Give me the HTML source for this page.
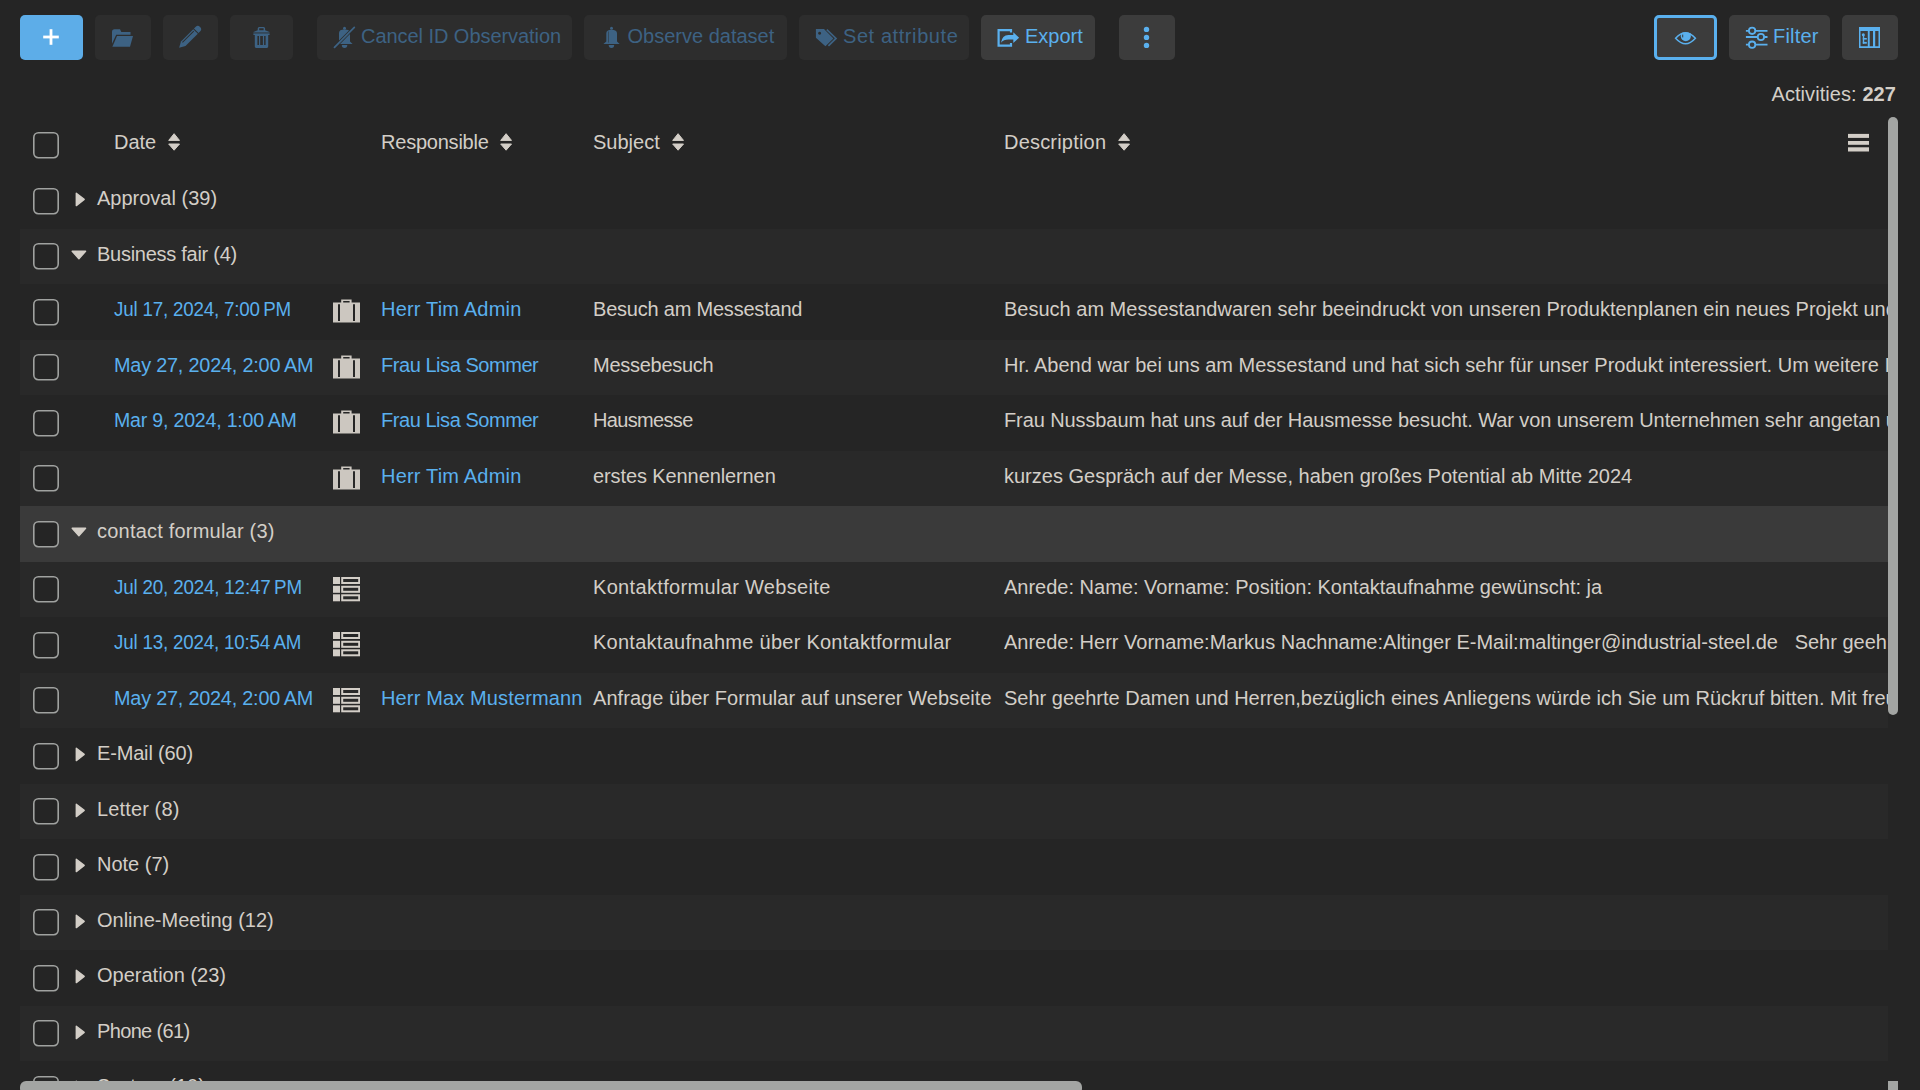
<!DOCTYPE html>
<html><head><meta charset="utf-8"><title>Activities</title><style>
html,body{margin:0;padding:0;width:1920px;height:1090px;overflow:hidden;background:#252525;font-family:"Liberation Sans",sans-serif;font-size:20px;color:#d3cec7}
.a{position:absolute}
.a svg{display:block}
svg.a{display:block}
.t{position:absolute;white-space:nowrap;line-height:22px;height:22px}
.btn{position:absolute;top:15px;height:45px;border-radius:5px}
.row{position:absolute;left:20px;width:1868px;height:55.5px}
.cb{position:absolute;left:33px;width:26px;height:26.6px;box-sizing:border-box;border:2px solid #8a8b8a;border-radius:5px;background:#252525}
</style></head><body>
<div class="btn" style="left:20px;width:63px;background:#5dade8;"></div>
<svg class="a" style="left:41px;top:27px" width="20" height="20" viewBox="0 0 20 20"><rect x="8.6" y="2.2" width="2.8" height="15.6" fill="#fff"/><rect x="2.2" y="8.6" width="15.6" height="2.8" fill="#fff"/></svg>
<div class="btn" style="left:95px;width:56px;background:#2d2d2d;"></div>
<svg class="a" style="left:105px;top:20px" width="40" height="35" viewBox="0 0 40 35"><g fill="#3d6283"><path d="M7 12 Q7 9.3 9.5 9.3 L15 9.3 L16.3 12 L25.5 12 L25.5 14.8 L11.2 14.8 L7 23.8 Z"/><path d="M12 15.9 L28 15.9 L25 26.7 L7.4 26.7 Z"/></g></svg>
<div class="btn" style="left:163px;width:55px;background:#2d2d2d;"></div>
<svg class="a" style="left:170px;top:20px" width="40" height="35" viewBox="0 0 40 35"><g fill="#3d6283" transform="rotate(-45 19.6 17.4)"><path d="M4.8 17.4 L10.6 14.2 L28 14.2 L28 20.6 L10.6 20.6 Z"/><path d="M29 14.2 L31.5 14.2 Q34.4 14.2 34.4 17.4 Q34.4 20.6 31.5 20.6 L29 20.6 Z"/><rect x="11" y="15.4" width="16" height="0.9" fill="#2d2d2d"/></g></svg>
<div class="btn" style="left:230px;width:63px;background:#2d2d2d;"></div>
<svg class="a" style="left:242px;top:20px" width="40" height="35" viewBox="0 0 40 35"><g fill="#3d6283"><path fill-rule="evenodd" d="M15.7 10.3 L15.7 8.4 Q15.7 6.9 17.2 6.9 L21.6 6.9 Q23.1 6.9 23.1 8.4 L23.1 10.3 L27.6 12 L27.6 12.6 L11.4 12.6 L11.4 12 Z M17.2 8.2 L17.2 10.3 L21.6 10.3 L21.6 8.2 Z"/><rect x="11.4" y="13.4" width="16.2" height="1.6"/><path fill-rule="evenodd" d="M12.8 15 L26.2 15 L26.2 26.6 Q26.2 27.9 24.9 27.9 L14.1 27.9 Q12.8 27.9 12.8 26.6 Z M15.4 16 L15.4 25 L17 25 L17 16 Z M18.2 16 L18.2 25 L20.9 25 L20.9 16 Z M22.1 16 L22.1 25 L23.6 25 L23.6 16 Z"/></g></svg>
<div class="btn" style="left:317px;width:255px;background:#2d2d2d;"></div>
<svg class="a" style="left:328px;top:22px" width="34" height="30" viewBox="0 0 34 30"><g fill="#3d6283"><circle cx="16.5" cy="6.3" r="1.5"/><path d="M11 19.5 L11 11 Q11 7.6 16.5 7.6 Q22 7.6 22 11 L22 19.5 L24.6 21.9 L8.3 21.9 Z"/><path d="M13.8 23.1 L19.3 23.1 Q19.3 26 16.5 26 Q13.8 26 13.8 23.1 Z"/></g><line x1="6.5" y1="25.4" x2="26.3" y2="5.4" stroke="#2d2d2d" stroke-width="3.2"/><line x1="6.5" y1="25.4" x2="26.3" y2="5.4" stroke="#3d6283" stroke-width="1.8" stroke-linecap="round"/></svg>
<div class="btn" style="left:584px;width:203px;background:#2d2d2d;"></div>
<svg class="a" style="left:598px;top:22px" width="26" height="30" viewBox="0 0 26 30"><g fill="#3d6283"><circle cx="13.5" cy="6.3" r="1.5"/><path d="M8.3 19.6 L8.3 11.2 Q8.3 7.7 13.5 7.7 Q19 7.7 19 11.2 L19 19.6 L21.7 22 L5.4 22 Z"/><path d="M10.7 23.1 L16.2 23.1 Q16.2 26 13.5 26 Q10.7 26 10.7 23.1 Z"/></g><rect x="10" y="9.5" width="0.8" height="11" fill="#2d2d2d" opacity="0.6"/></svg>
<div class="btn" style="left:799px;width:170px;background:#2d2d2d;"></div>
<svg class="a" style="left:810px;top:22px" width="32" height="30" viewBox="0 0 32 30"><path fill="#3d6283" fill-rule="evenodd" d="M5.9 7 L14 7 L23.4 16.5 L15.4 24.3 L5.9 15.8 Z M9.6 9.8 A1.5 1.5 0 1 0 9.61 9.8 Z"/><path fill="none" stroke="#3d6283" stroke-width="1.7" d="M16.8 7.7 L26 16.4 L18.4 23.9"/></svg>
<div class="btn" style="left:981px;width:114px;background:#3c3c3c;"></div>
<svg class="a" style="left:992px;top:22px" width="32" height="30" viewBox="0 0 32 30"><path fill="none" stroke="#5ab0ee" stroke-width="2.2" d="M19 10.6 L19 8.1 L6.6 8.1 L6.6 23.7 L19 23.7 L19 21"/><path fill="#5ab0ee" d="M9 20.8 Q10 13 16.5 12.9 L21.3 12.9 L21.3 10.2 L27.1 15.8 L21.3 20.9 L21.3 17.6 L16.5 17.6 Q11.5 17.6 9 20.8 Z"/></svg>
<div class="btn" style="left:1119px;width:56px;background:#3c3c3c;"></div>
<svg class="a" style="left:1130px;top:22px" width="32" height="30" viewBox="0 0 32 30"><g fill="#5ab0ee"><circle cx="16.5" cy="7.4" r="2.7"/><circle cx="16.5" cy="15.4" r="2.7"/><circle cx="16.5" cy="23.4" r="2.7"/></g></svg>
<div class="btn" style="left:1654px;width:63px;background:#3c3c3c;box-sizing:border-box;border:3px solid #5ab0ee"></div>
<svg class="a" style="left:1670px;top:25px" width="32" height="25" viewBox="0 0 32 25"><path fill="none" stroke="#5ab0ee" stroke-width="1.5" d="M5.6 13.2 Q15.5 2.2 25.4 13.2 Q15.5 24.2 5.6 13.2 Z"/><path fill="#5ab0ee" d="M11 8.3 Q15.8 6.6 20.6 8.3 Q20.8 9.6 20.8 11.3 A5 5 0 0 1 10.8 11.3 Q10.8 9.6 11 8.3 Z"/><rect x="12.2" y="9.6" width="1" height="2.8" fill="#3c3c3c"/></svg>
<div class="btn" style="left:1729px;width:101px;background:#3c3c3c;"></div>
<svg class="a" style="left:1740px;top:22px" width="32" height="30" viewBox="0 0 32 30"><g stroke="#5ab0ee" stroke-width="1.8" fill="none"><path d="M5.9 8.8 H8.9 M15.3 8.8 H27.5 M5.9 15 H17.7 M24.1 15 H27.5 M5.9 22.7 H8.9 M15.3 22.7 H27.5"/><circle cx="12.1" cy="8.8" r="3.2"/><circle cx="20.9" cy="15" r="3.2"/><circle cx="12.1" cy="22.7" r="3.2"/></g></svg>
<div class="btn" style="left:1842px;width:56px;background:#3c3c3c;"></div>
<svg class="a" style="left:1854px;top:22px" width="32" height="30" viewBox="0 0 32 30"><g fill="#5ab0ee"><path fill-rule="evenodd" d="M5 5 H26 V26 H5 Z M6.5 9.1 V24.3 H13.8 V9.1 Z M15.7 9.1 V24.3 H19 V9.1 Z M21.2 9.1 V24.3 H24.5 V9.1 Z"/><circle cx="9.3" cy="12.7" r="1.5"/><rect x="8.8" y="12.7" width="1.4" height="9"/><rect x="8.8" y="16" width="4" height="1.6"/><rect x="8.8" y="19.9" width="4" height="1.8"/></g></svg>
<div class="t" style="left:361px;top:25px;color:#3d6283;letter-spacing:-0.05px;">Cancel ID Observation</div>
<div class="t" style="left:627.5px;top:25px;color:#3d6283;">Observe dataset</div>
<div class="t" style="left:843px;top:25px;color:#3d6283;letter-spacing:0.58px;">Set attribute</div>
<div class="t" style="left:1025px;top:25px;color:#5ab0ee;">Export</div>
<div class="t" style="left:1773px;top:25px;color:#5ab0ee;letter-spacing:0.2px;">Filter</div>
<div class="t" style="left:1771.5px;top:83px;color:#d3cec7;letter-spacing:0.07px;">Activities: <b>227</b></div>
<svg class="a" style="left:33px;top:132.10px" width="26" height="27" viewBox="0 0 26 27"><rect x="0.8" y="0.8" width="24.4" height="24.9" rx="4.6" fill="#252525" stroke="#a0a2a0" stroke-width="1.6"/></svg>
<div class="t" style="left:114px;top:131px;">Date</div>
<div class="t" style="left:381px;top:131px;letter-spacing:-0.22px;">Responsible</div>
<div class="t" style="left:593px;top:131px;">Subject</div>
<div class="t" style="left:1004px;top:131px;letter-spacing:0.2px;">Description</div>
<svg class="a" style="left:168px;top:132.5px" width="12" height="19" viewBox="0 0 12 19"><path d="M6.1 0.7 L11.5 7.4 L0.7 7.4 Z M0.7 11 L11.5 11 L6.1 17.2 Z" fill="#d3cec7" stroke="#d3cec7" stroke-width="1" stroke-linejoin="round"/></svg>
<svg class="a" style="left:500px;top:132.5px" width="12" height="19" viewBox="0 0 12 19"><path d="M6.1 0.7 L11.5 7.4 L0.7 7.4 Z M0.7 11 L11.5 11 L6.1 17.2 Z" fill="#d3cec7" stroke="#d3cec7" stroke-width="1" stroke-linejoin="round"/></svg>
<svg class="a" style="left:672px;top:132.5px" width="12" height="19" viewBox="0 0 12 19"><path d="M6.1 0.7 L11.5 7.4 L0.7 7.4 Z M0.7 11 L11.5 11 L6.1 17.2 Z" fill="#d3cec7" stroke="#d3cec7" stroke-width="1" stroke-linejoin="round"/></svg>
<svg class="a" style="left:1118px;top:132.5px" width="12" height="19" viewBox="0 0 12 19"><path d="M6.1 0.7 L11.5 7.4 L0.7 7.4 Z M0.7 11 L11.5 11 L6.1 17.2 Z" fill="#d3cec7" stroke="#d3cec7" stroke-width="1" stroke-linejoin="round"/></svg>
<svg class="a" style="left:1848px;top:133px" width="21" height="19" viewBox="0 0 21 19"><g fill="#d3cec7"><rect x="0" y="0.9" width="21" height="4"/><rect x="0" y="8" width="21" height="3.8"/><rect x="0" y="14.3" width="21" height="4.2"/></g></svg>
<svg class="a" style="left:33px;top:187.70px" width="26" height="27" viewBox="0 0 26 27"><rect x="0.8" y="0.8" width="24.4" height="24.9" rx="4.6" fill="#252525" stroke="#a0a2a0" stroke-width="1.6"/></svg>
<svg class="a" style="left:75px;top:192.3px" width="11" height="16" viewBox="0 0 11 16"><path d="M1.3 1.2 L9.2 7.4 L1.3 13.6 Z" fill="#d3cec7" stroke="#d3cec7" stroke-width="1.4" stroke-linejoin="round"/></svg>
<div class="t" style="left:97px;top:187px;">Approval (39)</div>
<div class="row" style="top:228.50px;background:#292929"></div>
<svg class="a" style="left:33px;top:243.20px" width="26" height="27" viewBox="0 0 26 27"><rect x="0.8" y="0.8" width="24.4" height="24.9" rx="4.6" fill="#252525" stroke="#a0a2a0" stroke-width="1.6"/></svg>
<svg class="a" style="left:71px;top:249.8px" width="16" height="11" viewBox="0 0 16 11"><path d="M1.2 1.2 L14.6 1.2 L7.9 8.8 Z" fill="#d3cec7" stroke="#d3cec7" stroke-width="1.4" stroke-linejoin="round"/></svg>
<div class="t" style="left:97px;top:243px;letter-spacing:-0.27px;">Business fair (4)</div>
<svg class="a" style="left:33px;top:298.70px" width="26" height="27" viewBox="0 0 26 27"><rect x="0.8" y="0.8" width="24.4" height="24.9" rx="4.6" fill="#252525" stroke="#a0a2a0" stroke-width="1.6"/></svg>
<div class="t" style="left:114px;top:298px;color:#5ab0ee;letter-spacing:-0.2px;transform:scaleX(0.9375);transform-origin:0 0;">Jul 17, 2024, 7:00 PM</div>
<div class="a" style="left:333px;top:299.40px;width:27px;height:25px"><svg width="27" height="25" viewBox="0 0 27 25"><path fill="#ccc7c0" fill-rule="evenodd" d="M8.2 0.6 H18.6 V3.6 H27 V23.6 H0 V3.6 H8.2 Z M10.2 2.1 V3.6 H16.6 V2.1 Z M5 5.2 V22 H7 V5.2 Z M20 5.2 V22 H22 V5.2 Z"/></svg></div>
<div class="t" style="left:381px;top:298px;color:#5ab0ee;letter-spacing:0.19px;">Herr Tim Admin</div>
<div class="t" style="left:593px;top:298px;letter-spacing:-0.21px;">Besuch am Messestand</div>
<div class="t" style="left:1004px;top:298px;width:884px;overflow:hidden">Besuch am Messestandwaren sehr beeindruckt von unseren Produktenplanen ein neues Projekt und benötigen dafür</div>
<div class="row" style="top:339.50px;background:#292929"></div>
<svg class="a" style="left:33px;top:354.20px" width="26" height="27" viewBox="0 0 26 27"><rect x="0.8" y="0.8" width="24.4" height="24.9" rx="4.6" fill="#252525" stroke="#a0a2a0" stroke-width="1.6"/></svg>
<div class="t" style="left:114px;top:354px;color:#5ab0ee;letter-spacing:-0.2px;transform:scaleX(0.9917);transform-origin:0 0;">May 27, 2024, 2:00 AM</div>
<div class="a" style="left:333px;top:354.90px;width:27px;height:25px"><svg width="27" height="25" viewBox="0 0 27 25"><path fill="#ccc7c0" fill-rule="evenodd" d="M8.2 0.6 H18.6 V3.6 H27 V23.6 H0 V3.6 H8.2 Z M10.2 2.1 V3.6 H16.6 V2.1 Z M5 5.2 V22 H7 V5.2 Z M20 5.2 V22 H22 V5.2 Z"/></svg></div>
<div class="t" style="left:381px;top:354px;color:#5ab0ee;letter-spacing:-0.45px;">Frau Lisa Sommer</div>
<div class="t" style="left:593px;top:354px;letter-spacing:-0.27px;">Messebesuch</div>
<div class="t" style="left:1004px;top:354px;width:884px;overflow:hidden">Hr. Abend war bei uns am Messestand und hat sich sehr für unser Produkt interessiert. Um weitere Informationen</div>
<svg class="a" style="left:33px;top:409.70px" width="26" height="27" viewBox="0 0 26 27"><rect x="0.8" y="0.8" width="24.4" height="24.9" rx="4.6" fill="#252525" stroke="#a0a2a0" stroke-width="1.6"/></svg>
<div class="t" style="left:114px;top:409px;color:#5ab0ee;letter-spacing:-0.2px;transform:scaleX(0.9776);transform-origin:0 0;">Mar 9, 2024, 1:00 AM</div>
<div class="a" style="left:333px;top:410.40px;width:27px;height:25px"><svg width="27" height="25" viewBox="0 0 27 25"><path fill="#ccc7c0" fill-rule="evenodd" d="M8.2 0.6 H18.6 V3.6 H27 V23.6 H0 V3.6 H8.2 Z M10.2 2.1 V3.6 H16.6 V2.1 Z M5 5.2 V22 H7 V5.2 Z M20 5.2 V22 H22 V5.2 Z"/></svg></div>
<div class="t" style="left:381px;top:409px;color:#5ab0ee;letter-spacing:-0.45px;">Frau Lisa Sommer</div>
<div class="t" style="left:593px;top:409px;letter-spacing:-0.66px;">Hausmesse</div>
<div class="t" style="left:1004px;top:409px;width:884px;overflow:hidden"><span style="letter-spacing:-0.1px">Frau Nussbaum hat uns auf der Hausmesse besucht. War von unserem Unternehmen sehr angetan und</span></div>
<div class="row" style="top:450.50px;background:#292929"></div>
<svg class="a" style="left:33px;top:465.20px" width="26" height="27" viewBox="0 0 26 27"><rect x="0.8" y="0.8" width="24.4" height="24.9" rx="4.6" fill="#252525" stroke="#a0a2a0" stroke-width="1.6"/></svg>
<div class="a" style="left:333px;top:465.90px;width:27px;height:25px"><svg width="27" height="25" viewBox="0 0 27 25"><path fill="#ccc7c0" fill-rule="evenodd" d="M8.2 0.6 H18.6 V3.6 H27 V23.6 H0 V3.6 H8.2 Z M10.2 2.1 V3.6 H16.6 V2.1 Z M5 5.2 V22 H7 V5.2 Z M20 5.2 V22 H22 V5.2 Z"/></svg></div>
<div class="t" style="left:381px;top:465px;color:#5ab0ee;letter-spacing:0.19px;">Herr Tim Admin</div>
<div class="t" style="left:593px;top:465px;letter-spacing:-0.1px;">erstes Kennenlernen</div>
<div class="t" style="left:1004px;top:465px;width:884px;overflow:hidden">kurzes Gespräch auf der Messe, haben großes Potential ab Mitte 2024</div>
<div class="row" style="top:506.00px;background:#3a3a3a"></div>
<svg class="a" style="left:33px;top:520.70px" width="26" height="27" viewBox="0 0 26 27"><rect x="0.8" y="0.8" width="24.4" height="24.9" rx="4.6" fill="#252525" stroke="#a0a2a0" stroke-width="1.6"/></svg>
<svg class="a" style="left:71px;top:527.3px" width="16" height="11" viewBox="0 0 16 11"><path d="M1.2 1.2 L14.6 1.2 L7.9 8.8 Z" fill="#d3cec7" stroke="#d3cec7" stroke-width="1.4" stroke-linejoin="round"/></svg>
<div class="t" style="left:97px;top:520px;letter-spacing:0.21px;">contact formular (3)</div>
<div class="row" style="top:561.50px;background:#292929"></div>
<svg class="a" style="left:33px;top:576.20px" width="26" height="27" viewBox="0 0 26 27"><rect x="0.8" y="0.8" width="24.4" height="24.9" rx="4.6" fill="#252525" stroke="#a0a2a0" stroke-width="1.6"/></svg>
<div class="t" style="left:114px;top:576px;color:#5ab0ee;letter-spacing:-0.2px;transform:scaleX(0.9407);transform-origin:0 0;">Jul 20, 2024, 12:47 PM</div>
<div class="a" style="left:333px;top:576.90px;width:27px;height:25px"><svg width="27" height="25" viewBox="0 0 27 25"><g fill="#d3cec7"><rect x="0" y="0" width="7" height="7"/><rect x="0" y="8.8" width="7" height="7"/><rect x="0" y="17.3" width="7" height="7"/></g><g fill="none" stroke="#d3cec7" stroke-width="2"><rect x="9.2" y="1" width="17" height="5"/><rect x="9.2" y="9.8" width="17" height="5"/><rect x="9.2" y="18.3" width="17" height="5"/></g></svg></div>
<div class="t" style="left:593px;top:576px;letter-spacing:0.33px;">Kontaktformular Webseite</div>
<div class="t" style="left:1004px;top:576px;width:884px;overflow:hidden">Anrede: Name: Vorname: Position: Kontaktaufnahme gewünscht: ja</div>
<svg class="a" style="left:33px;top:631.70px" width="26" height="27" viewBox="0 0 26 27"><rect x="0.8" y="0.8" width="24.4" height="24.9" rx="4.6" fill="#252525" stroke="#a0a2a0" stroke-width="1.6"/></svg>
<div class="t" style="left:114px;top:631px;color:#5ab0ee;letter-spacing:-0.2px;transform:scaleX(0.9372);transform-origin:0 0;">Jul 13, 2024, 10:54 AM</div>
<div class="a" style="left:333px;top:632.40px;width:27px;height:25px"><svg width="27" height="25" viewBox="0 0 27 25"><g fill="#d3cec7"><rect x="0" y="0" width="7" height="7"/><rect x="0" y="8.8" width="7" height="7"/><rect x="0" y="17.3" width="7" height="7"/></g><g fill="none" stroke="#d3cec7" stroke-width="2"><rect x="9.2" y="1" width="17" height="5"/><rect x="9.2" y="9.8" width="17" height="5"/><rect x="9.2" y="18.3" width="17" height="5"/></g></svg></div>
<div class="t" style="left:593px;top:631px;letter-spacing:0.26px;">Kontaktaufnahme über Kontaktformular</div>
<div class="t" style="left:1004px;top:631px;width:884px;overflow:hidden">Anrede: Herr Vorname:Markus Nachname:Altinger E-Mail:maltinger@industrial-steel.de&nbsp;&nbsp;&nbsp;Sehr geehrte Damen</div>
<div class="row" style="top:672.50px;background:#292929"></div>
<svg class="a" style="left:33px;top:687.20px" width="26" height="27" viewBox="0 0 26 27"><rect x="0.8" y="0.8" width="24.4" height="24.9" rx="4.6" fill="#252525" stroke="#a0a2a0" stroke-width="1.6"/></svg>
<div class="t" style="left:114px;top:687px;color:#5ab0ee;letter-spacing:-0.2px;transform:scaleX(0.9907);transform-origin:0 0;">May 27, 2024, 2:00 AM</div>
<div class="a" style="left:333px;top:687.90px;width:27px;height:25px"><svg width="27" height="25" viewBox="0 0 27 25"><g fill="#d3cec7"><rect x="0" y="0" width="7" height="7"/><rect x="0" y="8.8" width="7" height="7"/><rect x="0" y="17.3" width="7" height="7"/></g><g fill="none" stroke="#d3cec7" stroke-width="2"><rect x="9.2" y="1" width="17" height="5"/><rect x="9.2" y="9.8" width="17" height="5"/><rect x="9.2" y="18.3" width="17" height="5"/></g></svg></div>
<div class="t" style="left:381px;top:687px;color:#5ab0ee;letter-spacing:0.14px;">Herr Max Mustermann</div>
<div class="t" style="left:593px;top:687px;letter-spacing:0.05px;">Anfrage über Formular auf unserer Webseite</div>
<div class="t" style="left:1004px;top:687px;width:884px;overflow:hidden">Sehr geehrte Damen und Herren,bezüglich eines Anliegens würde ich Sie um Rückruf bitten. Mit freundlichen Grüßen</div>
<svg class="a" style="left:33px;top:742.70px" width="26" height="27" viewBox="0 0 26 27"><rect x="0.8" y="0.8" width="24.4" height="24.9" rx="4.6" fill="#252525" stroke="#a0a2a0" stroke-width="1.6"/></svg>
<svg class="a" style="left:75px;top:747.3px" width="11" height="16" viewBox="0 0 11 16"><path d="M1.3 1.2 L9.2 7.4 L1.3 13.6 Z" fill="#d3cec7" stroke="#d3cec7" stroke-width="1.4" stroke-linejoin="round"/></svg>
<div class="t" style="left:97px;top:742px;letter-spacing:-0.17px;">E-Mail (60)</div>
<div class="row" style="top:783.50px;background:#292929"></div>
<svg class="a" style="left:33px;top:798.20px" width="26" height="27" viewBox="0 0 26 27"><rect x="0.8" y="0.8" width="24.4" height="24.9" rx="4.6" fill="#252525" stroke="#a0a2a0" stroke-width="1.6"/></svg>
<svg class="a" style="left:75px;top:802.8px" width="11" height="16" viewBox="0 0 11 16"><path d="M1.3 1.2 L9.2 7.4 L1.3 13.6 Z" fill="#d3cec7" stroke="#d3cec7" stroke-width="1.4" stroke-linejoin="round"/></svg>
<div class="t" style="left:97px;top:798px;letter-spacing:0.13px;">Letter (8)</div>
<svg class="a" style="left:33px;top:853.70px" width="26" height="27" viewBox="0 0 26 27"><rect x="0.8" y="0.8" width="24.4" height="24.9" rx="4.6" fill="#252525" stroke="#a0a2a0" stroke-width="1.6"/></svg>
<svg class="a" style="left:75px;top:858.3px" width="11" height="16" viewBox="0 0 11 16"><path d="M1.3 1.2 L9.2 7.4 L1.3 13.6 Z" fill="#d3cec7" stroke="#d3cec7" stroke-width="1.4" stroke-linejoin="round"/></svg>
<div class="t" style="left:97px;top:853px;">Note (7)</div>
<div class="row" style="top:894.50px;background:#292929"></div>
<svg class="a" style="left:33px;top:909.20px" width="26" height="27" viewBox="0 0 26 27"><rect x="0.8" y="0.8" width="24.4" height="24.9" rx="4.6" fill="#252525" stroke="#a0a2a0" stroke-width="1.6"/></svg>
<svg class="a" style="left:75px;top:913.8px" width="11" height="16" viewBox="0 0 11 16"><path d="M1.3 1.2 L9.2 7.4 L1.3 13.6 Z" fill="#d3cec7" stroke="#d3cec7" stroke-width="1.4" stroke-linejoin="round"/></svg>
<div class="t" style="left:97px;top:909px;">Online-Meeting (12)</div>
<svg class="a" style="left:33px;top:964.70px" width="26" height="27" viewBox="0 0 26 27"><rect x="0.8" y="0.8" width="24.4" height="24.9" rx="4.6" fill="#252525" stroke="#a0a2a0" stroke-width="1.6"/></svg>
<svg class="a" style="left:75px;top:969.3px" width="11" height="16" viewBox="0 0 11 16"><path d="M1.3 1.2 L9.2 7.4 L1.3 13.6 Z" fill="#d3cec7" stroke="#d3cec7" stroke-width="1.4" stroke-linejoin="round"/></svg>
<div class="t" style="left:97px;top:964px;">Operation (23)</div>
<div class="row" style="top:1005.50px;background:#292929"></div>
<svg class="a" style="left:33px;top:1020.20px" width="26" height="27" viewBox="0 0 26 27"><rect x="0.8" y="0.8" width="24.4" height="24.9" rx="4.6" fill="#252525" stroke="#a0a2a0" stroke-width="1.6"/></svg>
<svg class="a" style="left:75px;top:1024.8px" width="11" height="16" viewBox="0 0 11 16"><path d="M1.3 1.2 L9.2 7.4 L1.3 13.6 Z" fill="#d3cec7" stroke="#d3cec7" stroke-width="1.4" stroke-linejoin="round"/></svg>
<div class="t" style="left:97px;top:1020px;letter-spacing:-0.65px;">Phone (61)</div>
<svg class="a" style="left:33px;top:1075.70px" width="26" height="27" viewBox="0 0 26 27"><rect x="0.8" y="0.8" width="24.4" height="24.9" rx="4.6" fill="#252525" stroke="#a0a2a0" stroke-width="1.6"/></svg>
<svg class="a" style="left:75px;top:1080.3px" width="11" height="16" viewBox="0 0 11 16"><path d="M1.3 1.2 L9.2 7.4 L1.3 13.6 Z" fill="#d3cec7" stroke="#d3cec7" stroke-width="1.4" stroke-linejoin="round"/></svg>
<div class="t" style="left:97px;top:1075px;">System (10)</div>
<div class="a" style="left:1888px;top:116.7px;width:10px;height:598.5px;background:#a3a5a3;border-radius:5px"></div>
<div class="a" style="left:20px;top:1080.6px;width:1062px;height:14px;background:#a3a5a3;border-radius:6px"></div>
<div class="a" style="left:1888px;top:1081px;width:10px;height:12px;background:#a3a5a3"></div>
</body></html>
